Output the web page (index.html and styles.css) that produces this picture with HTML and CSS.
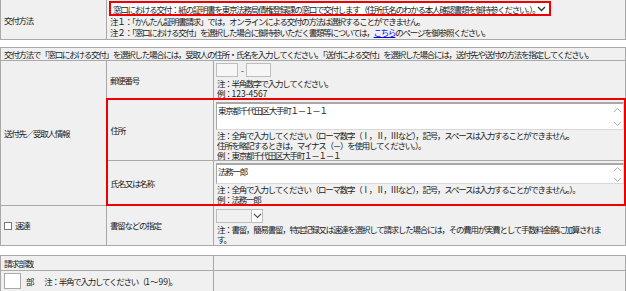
FILE: index.html
```html
<!DOCTYPE html>
<html lang="ja">
<head>
  <meta charset="UTF-8" />
  <title>交付方法</title>
  <link rel="stylesheet" href="styles.css">
</head>
<body>
  <table class="form top">
    <colgroup><col class="c-label"><col></colgroup>
    <tr class="row-method">
      <th>交付方法</th>
      <td class="value">
        <div class="select-box wide">
          <span class="select-text">窓口における交付：紙の証明書を東京法務局債権登録課の窓口で交付します（住所氏名のわかる本人確認書類を御持参ください。）。</span>
          <svg class="chev" width="9" height="6" viewBox="0 0 9 6"><path d="M1 1l3.5 3.5L8 1" fill="none" stroke="#333" stroke-width="1.4"/></svg>
        </div>
        <p class="note">注１：「かんたん証明書請求」では，オンラインによる交付の方法は選択することができません。</p>
        <p class="note">注２：「窓口における交付」を選択した場合に御持参いただく書類等については，<a href="#">こちら</a>のページを御参照ください。</p>
      </td>
    </tr>
  </table>

  <table class="form main">
    <colgroup><col class="c-label"><col class="c-sub"><col></colgroup>
    <tr class="row-head">
      <td colspan="3">交付方法で「窓口における交付」を選択した場合には，受取人の住所・氏名を入力してください。「送付による交付」を選択した場合には，送付先や送付の方法を指定してください。</td>
    </tr>
    <tr class="row-zip">
      <th rowspan="3">送付先／受取人情報</th>
      <th>郵便番号</th>
      <td class="value">
        <div class="zip">
          <span class="box zip-a"></span>
          <span class="dash">-</span>
          <span class="box zip-b"></span>
        </div>
        <p class="note">注：半角数字で入力してください。</p>
        <p class="note">例：<span class="latin">123-4567</span></p>
      </td>
    </tr>
    <tr class="row-addr marked-top">
      <th>住所</th>
      <td class="value">
        <div class="textarea tall">
          <span class="ta-text">東京都千代田区大手町１－１－１</span>
          <span class="ta-scroll">
            <svg width="9" height="6" viewBox="0 0 9 6"><path d="M1 5l3.5-3.5L8 5" fill="none" stroke="#b0b0b0" stroke-width="1"/></svg>
            <svg width="9" height="6" viewBox="0 0 9 6"><path d="M1 1l3.5 3.5L8 1" fill="none" stroke="#b0b0b0" stroke-width="1"/></svg>
          </span>
        </div>
        <p class="note">注：全角で入力してください（ローマ数字（Ⅰ，Ⅱ，Ⅲなど），記号，スペースは入力することができません。</p>
        <p class="note">住所を略記するときは，マイナス（－）を使用してください。）。</p>
        <p class="note">例：東京都千代田区大手町１－１－１</p>
      </td>
    </tr>
    <tr class="row-name marked-bottom">
      <th>氏名又は名称</th>
      <td class="value">
        <div class="textarea short">
          <span class="ta-text">法務一郎</span>
          <span class="ta-scroll">
            <svg width="9" height="6" viewBox="0 0 9 6"><path d="M1 5l3.5-3.5L8 5" fill="none" stroke="#b0b0b0" stroke-width="1"/></svg>
            <svg width="9" height="6" viewBox="0 0 9 6"><path d="M1 1l3.5 3.5L8 1" fill="none" stroke="#b0b0b0" stroke-width="1"/></svg>
          </span>
        </div>
        <p class="note">注：全角で入力してください（ローマ数字（Ⅰ，Ⅱ，Ⅲなど），記号，スペースは入力することができません。）。</p>
        <p class="note">例：法務一郎</p>
      </td>
    </tr>
    <tr class="row-express">
      <th><span class="check"></span>速達</th>
      <th>書留などの指定</th>
      <td class="value">
        <div class="select-box small">
          <span class="select-text"></span>
          <span class="chev-box"><svg width="9" height="6" viewBox="0 0 9 6"><path d="M1 1l3.5 3.5L8 1" fill="none" stroke="#555" stroke-width="1.2"/></svg></span>
        </div>
        <p class="note">注：書留，簡易書留，特定記録又は速達を選択して請求した場合には，その費用が実費として手数料金額に加算されま</p>
        <p class="note">す。</p>
      </td>
    </tr>
  </table>

  <table class="form copies">
    <colgroup><col class="c-wide"><col></colgroup>
    <tr class="row-copies-head">
      <td>請求部数</td>
      <td></td>
    </tr>
    <tr class="row-copies">
      <td>
        <div class="copies-line">
          <span class="box qty"></span>
          <span>部</span>
          <span class="copies-note">注：半角で入力してください（<span class="latin">1～99</span>)。</span>
        </div>
      </td>
      <td></td>
    </tr>
  </table>
</body>
</html>
```

FILE: styles.css
```css
body {
  margin: 0;
  background: #ffffff;
  color: #222222;
  font-family: "Noto Sans CJK JP", sans-serif;
  font-size: 8.5px;
  letter-spacing: -1.25px;
}

p {
  margin: 0;
}

a {
  color: #0000ee;
}

.latin {
  letter-spacing: 0;
}

.form {
  width: 626px;
  border-collapse: collapse;
  table-layout: fixed;
  background: #f0f0f0;
}

.form th,
.form td {
  border: 1px solid #a9a9a9;
  padding: 0 3px;
  text-align: left;
  font-weight: normal;
  vertical-align: middle;
  line-height: 10px;
  white-space: nowrap;
  overflow: hidden;
}

.c-label { width: 106px; }
.c-sub { width: 107px; }
.c-wide { width: 213px; }

/* top table */
.top {
  margin-top: -1px;
}

.top tr {
  height: 39px;
}

.top .value {
  padding: 1px 2px 1px;
}

.note {
  height: 10px;
  line-height: 10px;
  padding-left: 1px;
}

.top .note {
  height: 11px;
  line-height: 11px;
}

.select-box {
  display: flex;
  align-items: center;
  box-sizing: border-box;
  background: #ffffff;
}

.select-box.wide {
  width: 442px;
  height: 15px;
  border: 2px solid #ee0000;
  padding: 0 3px 0 2px;
}

.select-text {
  flex: 1;
  min-width: 0;
}

.chev {
  flex-shrink: 0;
  margin-left: 2px;
}

/* main table */
.main {
  margin-top: 7px;
}

.row-head {
  height: 13px;
}

.row-zip {
  height: 38px;
}

.row-addr {
  height: 61px;
}

.row-name {
  height: 44px;
}

.row-express {
  height: 40px;
}

.main .value {
  padding: 1px 2px 0;
}

.zip {
  display: flex;
  align-items: center;
  gap: 3px;
  height: 14px;
  margin: 1px 0 1px;
}

.box {
  display: inline-block;
  box-sizing: border-box;
  border: 1px solid #bdbdbd;
  background: #f6f6f6;
}

.zip-a {
  width: 22px;
  height: 14px;
}

.zip-b {
  width: 25px;
  height: 14px;
}

.textarea {
  display: flex;
  box-sizing: border-box;
  width: 408px;
  background: #ffffff;
  border: 1px solid #d8d8d8;
  border-top: 2px solid #a8a8a8;
  border-left: 1px solid #a8a8a8;
  margin-top: 1px;
}

.textarea.tall {
  height: 28px;
}

.textarea.short {
  height: 21px;
}

.ta-text {
  flex: 1;
  padding: 1px 1px;
}

.ta-scroll {
  display: flex;
  flex-direction: column;
  justify-content: space-between;
  padding: 3px 1px 2px;
}

.textarea.short .ta-scroll {
  padding: 1px 1px 0;
}

.ta-scroll svg {
  display: block;
}

/* red frame round the address and name rows */
.marked-top th,
.marked-top td {
  border-top: 2px solid #ee0000;
}

.marked-top th,
.marked-bottom th {
  border-left: 2px solid #ee0000;
}

.marked-top td,
.marked-bottom td {
  border-right: 2px solid #ee0000;
}

.marked-bottom th,
.marked-bottom td {
  border-bottom: 2px solid #ee0000;
}

.check {
  display: inline-block;
  width: 8px;
  height: 8px;
  box-sizing: border-box;
  border: 1px solid #777777;
  background: #ffffff;
  margin-right: 3px;
  vertical-align: -1px;
}

.select-box.small {
  width: 47px;
  height: 14px;
  border: 1px solid #bdbdbd;
  background: #f0f0f0;
  margin: 1px 0;
}

.chev-box {
  display: flex;
  align-items: center;
  justify-content: center;
  width: 11px;
  height: 12px;
  box-sizing: border-box;
  border-left: 1px solid #bdbdbd;
  background: #ffffff;
}

/* copies table */
.copies {
  margin-top: 9px;
}

.row-copies-head {
  height: 15px;
}

.row-copies {
  height: 21px;
}

.copies-line {
  display: flex;
  align-items: center;
  gap: 5px;
  height: 18px;
}

.qty {
  width: 17px;
  height: 16px;
  background: #ffffff;
  border-color: #a9a9a9;
}

.copies-note {
  margin-left: 6px;
}
```
